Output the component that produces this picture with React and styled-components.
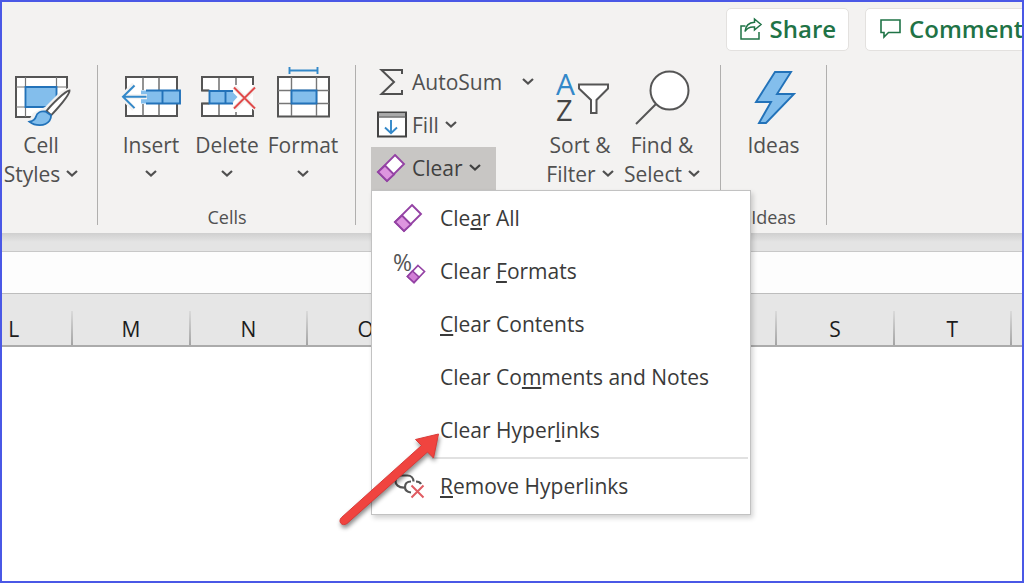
/**
 *
 * Spreadsheet ribbon with the Clear menu open
 *
 */

import React from 'react';
import styled, { createGlobalStyle } from 'styled-components';

const GlobalStyle = createGlobalStyle`
  * {
    box-sizing: border-box;
  }
  body {
    margin: 0;
    background: #fff;
    font-family: 'Open Sans', 'Noto Sans', sans-serif;
  }
  button {
    border: 0;
    padding: 0;
    background: none;
    color: inherit;
    font: inherit;
    cursor: pointer;
  }
  svg {
    display: block;
    flex: none;
    overflow: visible;
  }
`;

const Page = styled.div`
  min-height: 100vh;
  border: 2px solid #4a58e6;
  background: #fff;
  overflow: hidden;
`;

const Ribbon = styled.header`
  padding: 6px 0 8px;
  background: #f3f2f1;
  color: #505050;
  font-size: 21px;
`;

const TopBar = styled.div`
  display: flex;
  justify-content: flex-end;
  gap: 16px;
  margin: 0 -26px 14px 0;
`;

const TopButton = styled.button`
  display: flex;
  align-items: center;
  gap: 8px;
  height: 43px;
  padding: 0 12px 2px 13px;
  border: 1px solid #e3e1df;
  border-radius: 5px;
  background: #fff;
  color: #1f7346;
  font-size: 24px;
  font-weight: 600;
`;

const Groups = styled.div`
  display: flex;
`;

const Group = styled.section`
  display: flex;
  flex-direction: column;
  justify-content: space-between;
  height: 160px;
  padding: ${(props) => props.$padding || '0'};
  border-right: 1px solid #b0afae;
`;

const GroupBody = styled.div`
  display: flex;
`;

const Caption = styled.div`
  font-size: 18px;
  line-height: 16px;
  text-align: center;
`;

const BigButton = styled.button`
  display: flex;
  flex-direction: column;
  align-items: center;
  width: ${(props) => props.$width}px;
  line-height: 29px;
  white-space: nowrap;

  > svg {
    margin: 2px 0 4px;
  }
`;

const LabelLine = styled.span`
  display: flex;
  align-items: center;
  justify-content: center;
  gap: 6px;
  height: 29px;
`;

const CommandList = styled.div`
  display: flex;
  flex-direction: column;
  align-items: flex-start;
  width: 168px;
  margin-top: -4px;
`;

const Command = styled.button`
  display: flex;
  align-items: center;
  gap: ${(props) => (props.$split ? '20px' : '6px')};
  height: 43px;
  padding: 0 15px 1px 6px;
  background: ${(props) => (props.$open ? '#c8c6c4' : 'transparent')};
  color: ${(props) => (props.$open ? '#404040' : 'inherit')};
`;

const CommandLabel = styled.span`
  display: flex;
  align-items: center;
  gap: 7px;
`;

const MenuAnchor = styled.div`
  position: relative;
`;

const Menu = styled.div`
  position: absolute;
  top: 100%;
  left: 0;
  z-index: 10;
  width: 380px;
  padding-bottom: 2px;
  border: 1px solid #c2c2c2;
  background: #fff;
  box-shadow: 2px 3px 5px rgba(0, 0, 0, 0.18);
  color: #3a3a3a;
`;

const MenuItem = styled.button`
  display: flex;
  align-items: center;
  gap: 14px;
  width: 100%;
  height: 53px;
  padding-left: 22px;
  text-align: left;
  white-space: nowrap;

  u {
    text-decoration-thickness: 2px;
    text-underline-offset: 2px;
    text-decoration-skip-ink: none;
  }
`;

const MenuIcon = styled.span`
  width: 32px;
`;

const Divider = styled.hr`
  height: 2px;
  margin: 1px 2px 0 60px;
  border: 0;
  background: #e1e1e1;
`;

const Pointer = styled.svg`
  position: absolute;
  top: 234px;
  left: -37px;
  pointer-events: none;
  filter: drop-shadow(1px 3px 2px rgba(0, 0, 0, 0.45));
`;

const Gutter = styled.div`
  height: 19px;
  border-bottom: 1px solid #c8c8c8;
  background: linear-gradient(#cfcfcf, #e4e4e4 9px);
`;

const FormulaBar = styled.input`
  display: block;
  width: 100%;
  height: 41px;
  border: 0;
  padding: 0 12px;
  background: #fdfdfd;
  outline: 0;
`;

const HeaderBand = styled.div`
  padding-top: 17px;
  border-top: 1px solid #bdbdbd;
  border-bottom: 2px solid #ababab;
  background: #e6e6e6;
`;

const ColumnTable = styled.table`
  width: calc(100% + 46px);
  margin-left: -46px;
  border-collapse: collapse;
  table-layout: fixed;
`;

const ColumnHead = styled.th`
  width: ${(props) => (props.$cut ? '10px' : 'auto')};
  height: 34px;
  padding: 2px 2px 0 0;
  background: ${(props) =>
    props.$cut ? 'none' : 'linear-gradient(#dadada, #a4a4a4) right / 2px 100% no-repeat'};
  color: #1c1c1c;
  font-size: 21px;
  font-weight: 500;
  line-height: 32px;
`;

const Chevron = () => (
  <svg width="12" height="7" viewBox="0 0 12 7" fill="none" stroke="currentColor" strokeWidth="2.2">
    <path d="M1 0l5 4.600L11 0" />
  </svg>
);

const ShareIcon = () => (
  <svg width="22" height="22" viewBox="0 0 22 22" fill="none" stroke="#1f7346" strokeWidth="1.5">
    <path d="M5.500 8H1v13h18v-7" />
    <path d="M14.500 1l6.500 5.500-6.500 5.500V9C10 8.500 7 10 5 13.500 5.500 8 9 4.500 14.500 4.200z" />
  </svg>
);

const CommentIcon = () => (
  <svg width="22" height="22" viewBox="0 0 22 22" fill="none" stroke="#1f7346" strokeWidth="1.6">
    <path d="M2 2h19v12.500H9.500L5 19v-4.500H2z" />
  </svg>
);

const CellStylesIcon = () => (
  <svg width="60" height="60" viewBox="0 0 60 60" fill="none">
    <path d="M5 10h51v40H5z" fill="#fff" stroke="#555" strokeWidth="2" />
    <path d="M14.500 10v40M45.500 10v40M5 20h51M5 40h51" stroke="#777" strokeWidth="1.200" />
    <path d="M14.500 20h31v20h-31z" fill="#83beec" stroke="#2272b9" strokeWidth="1.800" />
    <path d="M57 21l7 1v4v26H34L28 55H17l5-9 12-6 15-15z" fill="#f3f2f1" />
    <path d="M58.500 23.500C54 24 40 38 35.500 44l4.800 4.200C46 42 59 28 58.500 23.500z" fill="#fff" stroke="#555" strokeWidth="1.900" />
    <path d="M34.500 44.500c-4.500-.8-8.500 1-9.500 5-.8 3-3 4.500-6.500 5.200 5.500 4.300 15.500 5 20-1 1.500-2.200 1.700-4 1.500-5.500z" fill="#83beec" stroke="#2272b9" strokeWidth="1.800" />
  </svg>
);

const InsertIcon = () => (
  <svg width="60" height="60" viewBox="0 0 60 60" fill="none">
    <path d="M5 10h51v39H5z" fill="#fff" />
    <path d="M5 23V10h51v39H5V36M56 18v24" stroke="#555" strokeWidth="2" />
    <path d="M22 10v13M38 10v13M22 37v12M38 37v12" stroke="#666" strokeWidth="1.400" />
    <path d="M20 23.500h39v13H20z" fill="#83beec" />
    <path d="M25 23.500h34v13H25M41.500 23.500v13" stroke="#2272b9" strokeWidth="1.900" />
    <path d="M13 17.500L1 29.800 13 42M1 29.800h25" stroke="#f3f2f1" strokeWidth="5" />
    <path d="M13.500 18.500L2 29.800l11.500 11.300M2 29.800h23.500" stroke="#3388c9" strokeWidth="2" />
  </svg>
);

const DeleteIcon = () => (
  <svg width="60" height="60" viewBox="0 0 60 60" fill="none">
    <path d="M5 10h51v39H5z" fill="#fff" />
    <path d="M4 24h33v12H4z" fill="#f3f2f1" />
    <path d="M22 10v13M39 10v8M22 37v12M39 45v4M5 23.500h8M5 36.500h8" stroke="#666" strokeWidth="1.400" />
    <path d="M12 23.500H5V10h51v8M12 36.500H5V49h51v-7" stroke="#555" strokeWidth="2" />
    <path d="M12.500 24h22l6 6-6 6.500h-22z" fill="#83beec" />
    <path d="M36 24H12.500v12.500H36M28.500 24v12.500" stroke="#2272b9" strokeWidth="1.900" />
    <path d="M37 20l22 22M59 20L37 42" stroke="#f3f2f1" strokeWidth="5" />
    <path d="M37 20.500l21 21M58 20.500l-21 21" stroke="#e04a4a" strokeWidth="2" />
  </svg>
);

const FormatIcon = () => (
  <svg width="60" height="60" viewBox="0 0 60 60" fill="none">
    <path d="M16.500 3.500h28M16.500 0v7M44.500 0v7" stroke="#3388c9" strokeWidth="1.900" />
    <path d="M5 10h51v39.500H5z" fill="#fff" stroke="#555" strokeWidth="2" />
    <path d="M18.500 10v39M43.500 10v39M5 23.500h51M5 36.500h51" stroke="#777" strokeWidth="1.400" />
    <path d="M18.500 23.500h25v13h-25z" fill="#83beec" stroke="#2272b9" strokeWidth="1.900" />
  </svg>
);

const SortIcon = () => (
  <svg width="60" height="60" viewBox="0 0 60 60" fill="none">
    <text x="6" y="28" fill="#3388c9" fontSize="30">A</text>
    <text x="6" y="54" fill="#444" fontSize="29">Z</text>
    <path d="M29 17.500h29v4L46.500 33v13h-5.500V33L29 21.500z" fill="#fff" stroke="#555" strokeWidth="2" />
  </svg>
);

const FindIcon = () => (
  <svg width="60" height="60" viewBox="0 0 60 60" fill="none" stroke="#555" strokeWidth="2">
    <circle cx="37.500" cy="23.500" r="19" fill="#fff" />
    <path d="M24 37L4 57" />
  </svg>
);

const IdeasIcon = () => (
  <svg width="60" height="60" viewBox="0 0 60 60" fill="#83beec" stroke="#2272b9" strokeWidth="1.900">
    <path d="M31 5h16L33 27h17L22 56h-7l12-21H12z" />
  </svg>
);

const SigmaIcon = () => (
  <svg width="28" height="28" viewBox="0 0 28 28" fill="none" stroke="#505050" strokeWidth="2">
    <path d="M25 6V2H4.500L17 14 4.500 26H25v-4" />
  </svg>
);

const FillIcon = () => (
  <svg width="28" height="28" viewBox="0 0 28 28" fill="none">
    <path d="M1 1.500h28v24H1z" fill="#fff" stroke="#444" strokeWidth="2" />
    <path d="M2 2.500h26v3H2z" fill="#aaa" />
    <path d="M1 6h28" stroke="#555" strokeWidth="1.300" />
    <path d="M14 9v13M8 16.500l6 5.800 6-5.800" stroke="#3388c9" strokeWidth="1.900" />
  </svg>
);

const EraserIcon = () => (
  <svg width="28" height="28" viewBox="0 0 28 28" fill="#fff" stroke="#9442a4" strokeWidth="1.900">
    <path d="M18 1l9 9-17 17-9-9z" />
    <path d="M8 11.500l9 9L10 27l-9-9z" fill="#dd95df" />
  </svg>
);

const ClearFormatsIcon = () => (
  <svg width="32" height="32" viewBox="0 0 32 32">
    <text x="-1" y="16" fill="#555" fontSize="23">%</text>
    <g fill="#fff" stroke="#9442a4" strokeWidth="1.700">
      <path d="M24 10.500l6.500 6-10.500 11-6.500-6z" />
      <path d="M18.500 16l6.500 6-5 5.500-6.500-6z" fill="#d27fd6" />
    </g>
  </svg>
);

const RemoveLinkIcon = () => (
  <svg width="32" height="32" viewBox="0 0 32 32" fill="none" stroke="#555" strokeWidth="2.200">
    <path d="M11 17.500C4 18 1.500 14 1.500 11.500 1.500 8 4 5.500 7.500 5.500h6c3.500 0 6 2.500 6 6" />
    <path d="M17 22.500c-4-.5-6-3-6-5.500 0-3.500 2.500-5.500 6-5.500M22 11.500c2.500 0 4 .5 5 2.500" />
    <path d="M17.500 15.500l12 12M29.500 15.500l-12 12" stroke="#e05c62" strokeWidth="2" />
  </svg>
);

const RedArrow = () => (
  <Pointer width="110" height="110" viewBox="0 0 110 110" aria-hidden="true">
    <path
      d="M103.500 9L98.500 33 92.500 27 12 98.500c-5 3.500-9.500-2-5.500-6L86.500 20.500 80.500 14.500z"
      fill="#f0443f"
      stroke="#d93a38"
    />
  </Pointer>
);

const columns = ['L', 'M', 'N', 'O', 'P', 'Q', 'R', 'S', 'T'];

function ClearMenu() {
  return (
    <Menu role="menu">
      <MenuItem role="menuitem">
        <MenuIcon><EraserIcon /></MenuIcon>
        <span>Cle<u>a</u>r All</span>
      </MenuItem>
      <MenuItem role="menuitem">
        <MenuIcon><ClearFormatsIcon /></MenuIcon>
        <span>Clear <u>F</u>ormats</span>
      </MenuItem>
      <MenuItem role="menuitem">
        <MenuIcon />
        <span><u>C</u>lear Contents</span>
      </MenuItem>
      <MenuItem role="menuitem">
        <MenuIcon />
        <span>Clear Co<u>m</u>ments and Notes</span>
      </MenuItem>
      <MenuItem role="menuitem">
        <MenuIcon />
        <span>Clear Hyper<u>l</u>inks</span>
      </MenuItem>
      <Divider />
      <MenuItem role="menuitem">
        <MenuIcon><RemoveLinkIcon /></MenuIcon>
        <span><u>R</u>emove Hyperlinks</span>
      </MenuItem>
      <RedArrow />
    </Menu>
  );
}

function App() {
  return (
    <Page>
      <GlobalStyle />
      <Ribbon>
        <TopBar>
          <TopButton><ShareIcon />Share</TopButton>
          <TopButton><CommentIcon />Comments</TopButton>
        </TopBar>
        <Groups>
          <Group $padding="0 17px 0 0">
            <BigButton $width={78}>
              <CellStylesIcon />
              <LabelLine>Cell</LabelLine>
              <LabelLine>Styles <Chevron /></LabelLine>
            </BigButton>
          </Group>
          <Group $padding="0 14px 0 15px">
            <GroupBody>
              <BigButton $width={76}>
                <InsertIcon />
                <LabelLine>Insert</LabelLine>
                <LabelLine><Chevron /></LabelLine>
              </BigButton>
              <BigButton $width={76}>
                <DeleteIcon />
                <LabelLine>Delete</LabelLine>
                <LabelLine><Chevron /></LabelLine>
              </BigButton>
              <BigButton $width={76}>
                <FormatIcon />
                <LabelLine>Format</LabelLine>
                <LabelLine><Chevron /></LabelLine>
              </BigButton>
            </GroupBody>
            <Caption>Cells</Caption>
          </Group>
          <Group $padding="0 17px 0 15px">
            <GroupBody>
              <CommandList>
                <Command $split>
                  <CommandLabel><SigmaIcon />AutoSum</CommandLabel>
                  <Chevron />
                </Command>
                <Command>
                  <CommandLabel><FillIcon />Fill</CommandLabel>
                  <Chevron />
                </Command>
                <MenuAnchor>
                  <Command $open aria-haspopup="menu" aria-expanded="true">
                    <CommandLabel><EraserIcon />Clear</CommandLabel>
                    <Chevron />
                  </Command>
                  <ClearMenu />
                </MenuAnchor>
              </CommandList>
              <BigButton $width={82}>
                <SortIcon />
                <LabelLine>Sort &amp;</LabelLine>
                <LabelLine>Filter <Chevron /></LabelLine>
              </BigButton>
              <BigButton $width={82}>
                <FindIcon />
                <LabelLine>Find &amp;</LabelLine>
                <LabelLine>Select <Chevron /></LabelLine>
              </BigButton>
            </GroupBody>
          </Group>
          <Group>
            <BigButton $width={105}>
              <IdeasIcon />
              <LabelLine>Ideas</LabelLine>
            </BigButton>
            <Caption>Ideas</Caption>
          </Group>
        </Groups>
      </Ribbon>
      <Gutter />
      <FormulaBar type="text" aria-label="Formula bar" />
      <HeaderBand>
        <ColumnTable>
          <thead>
            <tr>
              {columns.map((name) => (
                <ColumnHead key={name} scope="col">{name}</ColumnHead>
              ))}
              <ColumnHead $cut />
            </tr>
          </thead>
        </ColumnTable>
      </HeaderBand>
    </Page>
  );
}

export default App;
